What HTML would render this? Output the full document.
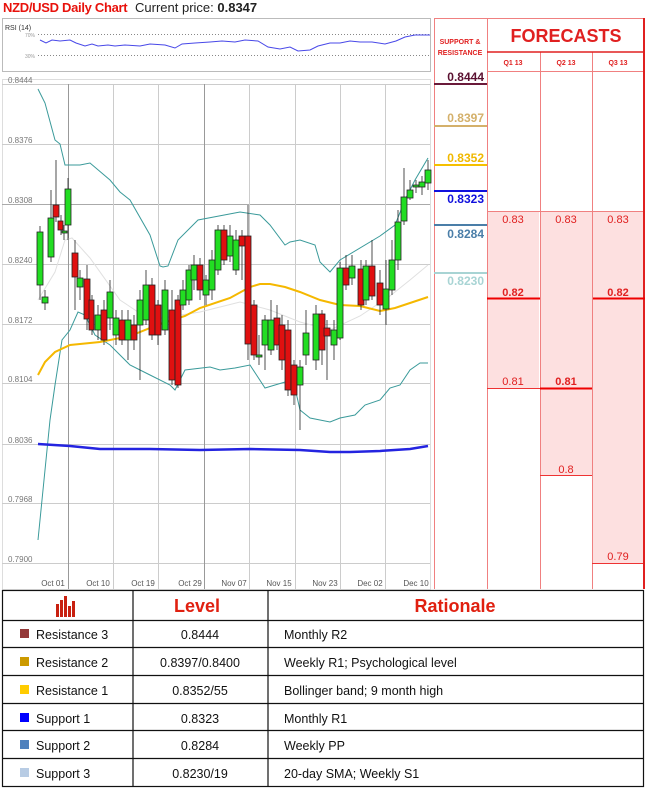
<!DOCTYPE html>
<html><head><meta charset="utf-8"><style>
body{margin:0;width:645px;height:789px;background:#fff;position:relative;overflow:hidden;font-family:"Liberation Sans",sans-serif}
.a{position:absolute}
</style></head><body>
<div class="a" style="left:3px;top:0;font-size:13px;font-weight:bold;color:#e8120c;letter-spacing:-0.3px">NZD/USD Daily Chart</div>
<div class="a" style="left:135px;top:0;font-size:13px;color:#222">Current price: <b>0.8347</b></div>

<svg class="a" style="left:0;top:0" width="645" height="789">
<!-- RSI box -->
<rect x="2.5" y="18.5" width="428" height="53" fill="#fff" stroke="#bbb"/>
<text x="5" y="30" font-size="7" fill="#333" font-family="Liberation Sans">RSI (14)</text>
<text x="25" y="37" font-size="5" fill="#999">70%</text>
<text x="25" y="58" font-size="5" fill="#999">30%</text>
<line x1="38" y1="34.5" x2="430" y2="34.5" stroke="#888" stroke-dasharray="1,2"/>
<line x1="38" y1="55.5" x2="430" y2="55.5" stroke="#888" stroke-dasharray="1,2"/>
<polyline fill="none" stroke="#4848e8" stroke-width="1" points="40,40 46,43 52,40 60,41 70,40 76,43 85,46 92,44 98,46 108,45 115,46 125,45 140,46 150,44 165,45 175,48 182,44 195,43 210,42 222,41 235,42 245,40 258,41 268,47 280,49 290,47 298,51 310,50 318,46 330,43 340,43 350,41 360,42 372,42 385,44 396,41 405,37 415,35 430,35"/>
<!-- chart area -->
<rect x="2.5" y="79.5" width="428" height="510" fill="#fff" stroke="#ddd"/>
<g stroke="#ccc" stroke-width="1">
<line x1="2" y1="84.5" x2="430" y2="84.5"/><line x1="2" y1="144.5" x2="430" y2="144.5"/><line x1="2" y1="204.5" x2="430" y2="204.5" stroke="#aaa"/><line x1="2" y1="264.5" x2="430" y2="264.5"/><line x1="2" y1="324.5" x2="430" y2="324.5"/><line x1="2" y1="383.5" x2="430" y2="383.5"/><line x1="2" y1="444.5" x2="430" y2="444.5"/><line x1="2" y1="503.5" x2="430" y2="503.5"/><line x1="2" y1="563.5" x2="430" y2="563.5"/>
<line x1="68.5" y1="84" x2="68.5" y2="589" stroke="#999"/><line x1="113.5" y1="84" x2="113.5" y2="589"/><line x1="158.5" y1="84" x2="158.5" y2="589"/><line x1="204.5" y1="84" x2="204.5" y2="589" stroke="#999"/><line x1="249.5" y1="84" x2="249.5" y2="589"/><line x1="295.5" y1="84" x2="295.5" y2="589"/><line x1="340.5" y1="84" x2="340.5" y2="589"/><line x1="385.5" y1="84" x2="385.5" y2="589"/>
</g>
<g font-size="8" fill="#777" font-family="Liberation Sans">
<text x="8" y="83">0.8444</text><text x="8" y="143">0.8376</text><text x="8" y="203">0.8308</text><text x="8" y="263">0.8240</text><text x="8" y="323">0.8172</text><text x="8" y="382">0.8104</text><text x="8" y="443">0.8036</text><text x="8" y="502">0.7968</text><text x="8" y="562">0.7900</text>
</g>
<g font-size="8" fill="#555" font-family="Liberation Sans" text-anchor="middle">
<text x="53" y="586">Oct 01</text><text x="98" y="586">Oct 10</text><text x="143" y="586">Oct 19</text><text x="190" y="586">Oct 29</text><text x="234" y="586">Nov 07</text><text x="279" y="586">Nov 15</text><text x="325" y="586">Nov 23</text><text x="370" y="586">Dec 02</text><text x="416" y="586">Dec 10</text>
</g>
<!-- indicator lines -->
<polyline fill="none" stroke="#e0e0e0" stroke-width="1" points="38,300 55,272 65,240 72,238 90,258 120,300 150,320 200,312 240,302 270,310 300,322 330,330 360,316 390,296 410,280 428,265"/>
<polyline fill="none" stroke="#3a9a9a" stroke-width="1" points="38,89 45,103 55,140 60,144 65,165 80,165 90,163 110,180 120,192 130,200 150,235 160,266 163,267 168,266 178,240 198,220 240,212 260,215 270,225 285,245 290,242 300,240 315,245 320,262 330,272 340,260 380,236 395,225 405,200 415,180 428,158"/>
<polyline fill="none" stroke="#3a9a9a" stroke-width="1" points="38,540 42,500 50,420 55,385 62,340 70,330 78,312 85,315 95,335 110,345 130,365 150,375 170,385 175,390 185,370 210,367 220,370 235,368 250,365 265,388 275,385 285,382 295,388 300,410 310,418 330,422 340,418 355,415 365,405 380,400 390,388 400,385 410,370 420,363 428,363"/>
<polyline fill="none" stroke="#f5b800" stroke-width="2" points="38,375 45,362 55,352 70,345 100,342 130,336 160,324 185,316 200,308 230,298 250,287 260,284 270,284 285,287 300,292 320,300 340,305 360,306 380,311 395,308 410,303 428,297"/>
<polyline fill="none" stroke="#2424e0" stroke-width="2.5" points="38,444 70,446 100,449 150,449 200,450 250,449 300,450 330,452 350,452 380,451 410,449 428,446"/>
<!-- candles -->
<g id="c" stroke="#222" stroke-width="0.8">
<line x1="40" y1="226" x2="40" y2="300"/><rect x="37" y="232" width="6" height="53" fill="#22dd22"/>
<line x1="45" y1="290" x2="45" y2="310"/><rect x="42" y="297" width="6" height="6" fill="#22dd22"/>
<line x1="51" y1="190" x2="51" y2="262"/><rect x="48" y="218" width="6" height="39" fill="#22dd22"/>
<line x1="56" y1="160" x2="56" y2="222"/><rect x="53" y="205" width="6" height="12" fill="#e01010"/>
<line x1="61" y1="215" x2="61" y2="235"/><rect x="58" y="221" width="5" height="9" fill="#e01010"/>
<line x1="64" y1="225" x2="64" y2="240"/><rect x="62" y="231" width="5" height="2" fill="#22dd22"/>
<line x1="68" y1="178" x2="68" y2="240"/><rect x="65" y="189" width="6" height="36" fill="#22dd22"/>
<line x1="75" y1="240" x2="75" y2="310"/><rect x="72" y="253" width="6" height="24" fill="#e01010"/>
<line x1="80" y1="270" x2="80" y2="300"/><rect x="77" y="278" width="6" height="9" fill="#22dd22"/>
<line x1="87" y1="265" x2="87" y2="330"/><rect x="84" y="279" width="6" height="40" fill="#e01010"/>
<line x1="92" y1="295" x2="92" y2="335"/><rect x="89" y="300" width="5" height="30" fill="#e01010"/>
<line x1="98" y1="305" x2="98" y2="340"/><rect x="95" y="315" width="6" height="15" fill="#22dd22"/>
<line x1="104" y1="300" x2="104" y2="345"/><rect x="101" y="310" width="6" height="30" fill="#e01010"/>
<line x1="110" y1="280" x2="110" y2="330"/><rect x="107" y="292" width="6" height="26" fill="#22dd22"/>
<line x1="116" y1="310" x2="116" y2="345"/><rect x="113" y="318" width="6" height="17" fill="#22dd22"/>
<line x1="122" y1="310" x2="122" y2="345"/><rect x="119" y="320" width="6" height="20" fill="#e01010"/>
<line x1="128" y1="310" x2="128" y2="360"/><rect x="125" y="320" width="6" height="20" fill="#22dd22"/>
<line x1="134" y1="315" x2="134" y2="350"/><rect x="131" y="325" width="6" height="15" fill="#e01010"/>
<line x1="140" y1="290" x2="140" y2="380"/><rect x="137" y="300" width="6" height="25" fill="#22dd22"/>
<line x1="146" y1="270" x2="146" y2="325"/><rect x="143" y="285" width="6" height="35" fill="#22dd22"/>
<line x1="152" y1="278" x2="152" y2="340"/><rect x="149" y="285" width="6" height="50" fill="#e01010"/>
<line x1="158" y1="300" x2="158" y2="345"/><rect x="155" y="305" width="6" height="30" fill="#e01010"/>
<line x1="165" y1="280" x2="165" y2="335"/><rect x="162" y="290" width="6" height="40" fill="#22dd22"/>
<line x1="172" y1="290" x2="172" y2="385"/><rect x="169" y="310" width="6" height="70" fill="#e01010"/>
<line x1="178" y1="295" x2="178" y2="388"/><rect x="175" y="300" width="6" height="85" fill="#e01010"/>
<line x1="183" y1="280" x2="183" y2="310"/><rect x="180" y="290" width="6" height="15" fill="#22dd22"/>
<line x1="189" y1="265" x2="189" y2="305"/><rect x="186" y="270" width="6" height="30" fill="#22dd22"/>
<line x1="194" y1="255" x2="194" y2="290"/><rect x="191" y="265" width="6" height="15" fill="#22dd22"/>
<line x1="200" y1="258" x2="200" y2="300"/><rect x="197" y="265" width="6" height="25" fill="#e01010"/>
<line x1="206" y1="275" x2="206" y2="305"/><rect x="203" y="280" width="6" height="15" fill="#22dd22"/>
<line x1="212" y1="250" x2="212" y2="300"/><rect x="209" y="260" width="6" height="30" fill="#22dd22"/>
<line x1="218" y1="225" x2="218" y2="275"/><rect x="215" y="230" width="6" height="40" fill="#22dd22"/>
<line x1="224" y1="225" x2="224" y2="265"/><rect x="221" y="230" width="6" height="30" fill="#e01010"/>
<line x1="230" y1="225" x2="230" y2="262"/><rect x="227" y="236" width="6" height="20" fill="#22dd22"/>
<line x1="236" y1="230" x2="236" y2="275"/><rect x="233" y="240" width="6" height="30" fill="#22dd22"/>
<line x1="242" y1="230" x2="242" y2="280"/><rect x="239" y="236" width="6" height="10" fill="#e01010"/>
<line x1="248" y1="205" x2="248" y2="360"/><rect x="245" y="236" width="6" height="108" fill="#e01010"/>
<line x1="254" y1="300" x2="254" y2="360"/><rect x="251" y="305" width="6" height="50" fill="#e01010"/>
<line x1="259" y1="335" x2="259" y2="365"/><rect x="256" y="355" width="6" height="2" fill="#22dd22"/>
<line x1="265" y1="315" x2="265" y2="370"/><rect x="262" y="320" width="6" height="25" fill="#22dd22"/>
<line x1="271" y1="300" x2="271" y2="355"/><rect x="268" y="320" width="6" height="30" fill="#22dd22"/>
<line x1="277" y1="305" x2="277" y2="350"/><rect x="274" y="318" width="6" height="27" fill="#e01010"/>
<line x1="282" y1="315" x2="282" y2="370"/><rect x="279" y="325" width="6" height="35" fill="#e01010"/>
<line x1="288" y1="320" x2="288" y2="396"/><rect x="285" y="330" width="6" height="60" fill="#e01010"/>
<line x1="294" y1="360" x2="294" y2="405"/><rect x="291" y="365" width="6" height="30" fill="#e01010"/>
<line x1="300" y1="360" x2="300" y2="430"/><rect x="297" y="367" width="6" height="18" fill="#22dd22"/>
<line x1="306" y1="310" x2="306" y2="365"/><rect x="303" y="333" width="6" height="22" fill="#22dd22"/>
<line x1="316" y1="305" x2="316" y2="370"/><rect x="313" y="314" width="6" height="46" fill="#22dd22"/>
<line x1="322" y1="310" x2="322" y2="365"/><rect x="319" y="314" width="6" height="36" fill="#e01010"/>
<line x1="327" y1="320" x2="327" y2="380"/><rect x="324" y="328" width="6" height="8" fill="#e01010"/>
<line x1="334" y1="320" x2="334" y2="360"/><rect x="331" y="330" width="6" height="15" fill="#22dd22"/>
<line x1="340" y1="262" x2="340" y2="340"/><rect x="337" y="268" width="6" height="70" fill="#22dd22"/>
<line x1="346" y1="255" x2="346" y2="290"/><rect x="343" y="268" width="6" height="17" fill="#e01010"/>
<line x1="352" y1="255" x2="352" y2="285"/><rect x="349" y="266" width="6" height="12" fill="#22dd22"/>
<line x1="361" y1="260" x2="361" y2="310"/><rect x="358" y="269" width="6" height="36" fill="#e01010"/>
<line x1="366" y1="260" x2="366" y2="305"/><rect x="363" y="266" width="6" height="34" fill="#22dd22"/>
<line x1="372" y1="240" x2="372" y2="300"/><rect x="369" y="266" width="6" height="30" fill="#e01010"/>
<line x1="380" y1="270" x2="380" y2="315"/><rect x="377" y="283" width="6" height="22" fill="#e01010"/>
<line x1="386" y1="260" x2="386" y2="325"/><rect x="383" y="289" width="6" height="20" fill="#22dd22"/>
<line x1="392" y1="240" x2="392" y2="295"/><rect x="389" y="260" width="6" height="30" fill="#22dd22"/>
<line x1="398" y1="210" x2="398" y2="270"/><rect x="395" y="222" width="6" height="38" fill="#22dd22"/>
<line x1="404" y1="168" x2="404" y2="225"/><rect x="401" y="197" width="6" height="24" fill="#22dd22"/>
<line x1="410" y1="180" x2="410" y2="200"/><rect x="407" y="190" width="6" height="8" fill="#22dd22"/>
<line x1="416" y1="180" x2="416" y2="193"/><rect x="413" y="185" width="6" height="2" fill="#22dd22"/>
<line x1="422" y1="176" x2="422" y2="195"/><rect x="419" y="182" width="6" height="5" fill="#22dd22"/>
<line x1="428" y1="160" x2="428" y2="190"/><rect x="425" y="170" width="6" height="13" fill="#22dd22"/>
</g>

<!-- right panel -->
<rect x="487" y="211" width="52" height="177" fill="#fde0e0"/>
<rect x="540" y="211" width="52" height="264" fill="#fde0e0"/>
<rect x="593" y="211" width="50" height="352" fill="#fde0e0"/>
<g stroke="#f08080" stroke-width="1">
<line x1="434.5" y1="18" x2="434.5" y2="589"/>
<line x1="487.5" y1="18" x2="487.5" y2="589"/>
<line x1="540.5" y1="52" x2="540.5" y2="589"/>
<line x1="592.5" y1="52" x2="592.5" y2="589"/>
<line x1="434" y1="18.5" x2="645" y2="18.5"/>
<line x1="487" y1="71.5" x2="645" y2="71.5"/>
<line x1="487" y1="211.5" x2="645" y2="211.5"/>
<line x1="487" y1="388.5" x2="540" y2="388.5" stroke="#e33"/>
<line x1="540" y1="475.5" x2="592" y2="475.5" stroke="#e33"/>
<line x1="592" y1="563.5" x2="645" y2="563.5" stroke="#e33"/>
</g>
<line x1="487" y1="52" x2="645" y2="52" stroke="#e02020" stroke-width="1.5"/>
<line x1="644" y1="18" x2="644" y2="589" stroke="#e02020" stroke-width="2"/>
<line x1="487" y1="298.5" x2="540" y2="298.5" stroke="#e00" stroke-width="2"/>
<line x1="593" y1="298.5" x2="645" y2="298.5" stroke="#e00" stroke-width="2"/>
<line x1="540" y1="388.5" x2="592" y2="388.5" stroke="#e00" stroke-width="2"/>
<g stroke-width="2">
<line x1="434" y1="84" x2="487" y2="84" stroke="#6a1a3a"/>
<line x1="434" y1="126" x2="487" y2="126" stroke="#d4b06a"/>
<line x1="434" y1="165" x2="487" y2="165" stroke="#f5c000"/>
<line x1="434" y1="191" x2="487" y2="191" stroke="#1010dd"/>
<line x1="434" y1="225" x2="487" y2="225" stroke="#4a7ea8"/>
<line x1="434" y1="273" x2="487" y2="273" stroke="#a8d4d4"/>
</g>
<g font-family="Liberation Sans" font-weight="bold" font-size="12" text-anchor="end">
<text x="484" y="81" fill="#5a1030">0.8444</text>
<text x="484" y="122" fill="#d4b06a">0.8397</text>
<text x="484" y="162" fill="#f0b800">0.8352</text>
<text x="484" y="203" fill="#1010dd">0.8323</text>
<text x="484" y="238" fill="#4a7ea8">0.8284</text>
<text x="484" y="285" fill="#a8d4d4">0.8230</text>
</g>
<g font-family="Liberation Sans" font-weight="bold" fill="#e02020" text-anchor="middle">
<text x="460" y="44" font-size="7">SUPPORT &amp;</text>
<text x="460" y="55" font-size="7">RESISTANCE</text>
<text x="566" y="42" font-size="18">FORECASTS</text>
<text x="513" y="65" font-size="7">Q1 13</text>
<text x="566" y="65" font-size="7">Q2 13</text>
<text x="618" y="65" font-size="7">Q3 13</text>
</g>
<g font-family="Liberation Sans" fill="#e02020" font-size="11" text-anchor="middle">
<text x="513" y="223">0.83</text><text x="566" y="223">0.83</text><text x="618" y="223">0.83</text>
<text x="513" y="296" font-weight="bold">0.82</text><text x="618" y="296" font-weight="bold">0.82</text>
<text x="513" y="385">0.81</text><text x="566" y="385" font-weight="bold">0.81</text>
<text x="566" y="473">0.8</text><text x="618" y="560">0.79</text>
</g>

<!-- table -->
<g stroke="#111" stroke-width="1.2" fill="none">
<rect x="2.5" y="590.5" width="641" height="196"/>
<line x1="133" y1="590" x2="133" y2="787"/><line x1="268" y1="590" x2="268" y2="787"/>
<line x1="2" y1="620.5" x2="644" y2="620.5"/><line x1="2" y1="647.5" x2="644" y2="647.5"/><line x1="2" y1="675.5" x2="644" y2="675.5"/><line x1="2" y1="703.5" x2="644" y2="703.5"/><line x1="2" y1="730.5" x2="644" y2="730.5"/><line x1="2" y1="758.5" x2="644" y2="758.5"/>
</g>
<g fill="#c82010">
<rect x="56" y="604" width="3" height="13"/><rect x="60" y="600" width="3" height="17"/><rect x="64" y="596" width="3" height="21"/><rect x="68" y="606" width="3" height="11"/><rect x="72" y="601" width="3" height="16"/>
</g>
<g font-family="Liberation Sans" font-weight="bold" fill="#e02010" font-size="18" text-anchor="middle">
<text x="197" y="612">Level</text><text x="455" y="612">Rationale</text>
</g>
<rect x="20" y="629" width="9" height="9" fill="#943838"/>
<rect x="20" y="657" width="9" height="9" fill="#cc9a00"/>
<rect x="20" y="685" width="9" height="9" fill="#ffcc00"/>
<rect x="20" y="713" width="9" height="9" fill="#0000ff"/>
<rect x="20" y="740" width="9" height="9" fill="#4f81bd"/>
<rect x="20" y="768" width="9" height="9" fill="#b8cce4"/>
<g font-family="Liberation Sans" font-size="12.5" fill="#111">
<text x="36" y="639">Resistance 3</text><text x="36" y="667">Resistance 2</text><text x="36" y="695">Resistance 1</text><text x="36" y="723">Support 1</text><text x="36" y="750">Support 2</text><text x="36" y="778">Support 3</text>
<text x="284" y="639">Monthly R2</text><text x="284" y="667">Weekly R1; Psychological level</text><text x="284" y="695">Bollinger band; 9 month high</text><text x="284" y="723">Monthly R1</text><text x="284" y="750">Weekly PP</text><text x="284" y="778">20-day SMA; Weekly S1</text>
</g>
<g font-family="Liberation Sans" font-size="12.5" fill="#111" text-anchor="middle">
<text x="200" y="639">0.8444</text><text x="200" y="667">0.8397/0.8400</text><text x="200" y="695">0.8352/55</text><text x="200" y="723">0.8323</text><text x="200" y="750">0.8284</text><text x="200" y="778">0.8230/19</text>
</g>
</svg>
</body></html>
